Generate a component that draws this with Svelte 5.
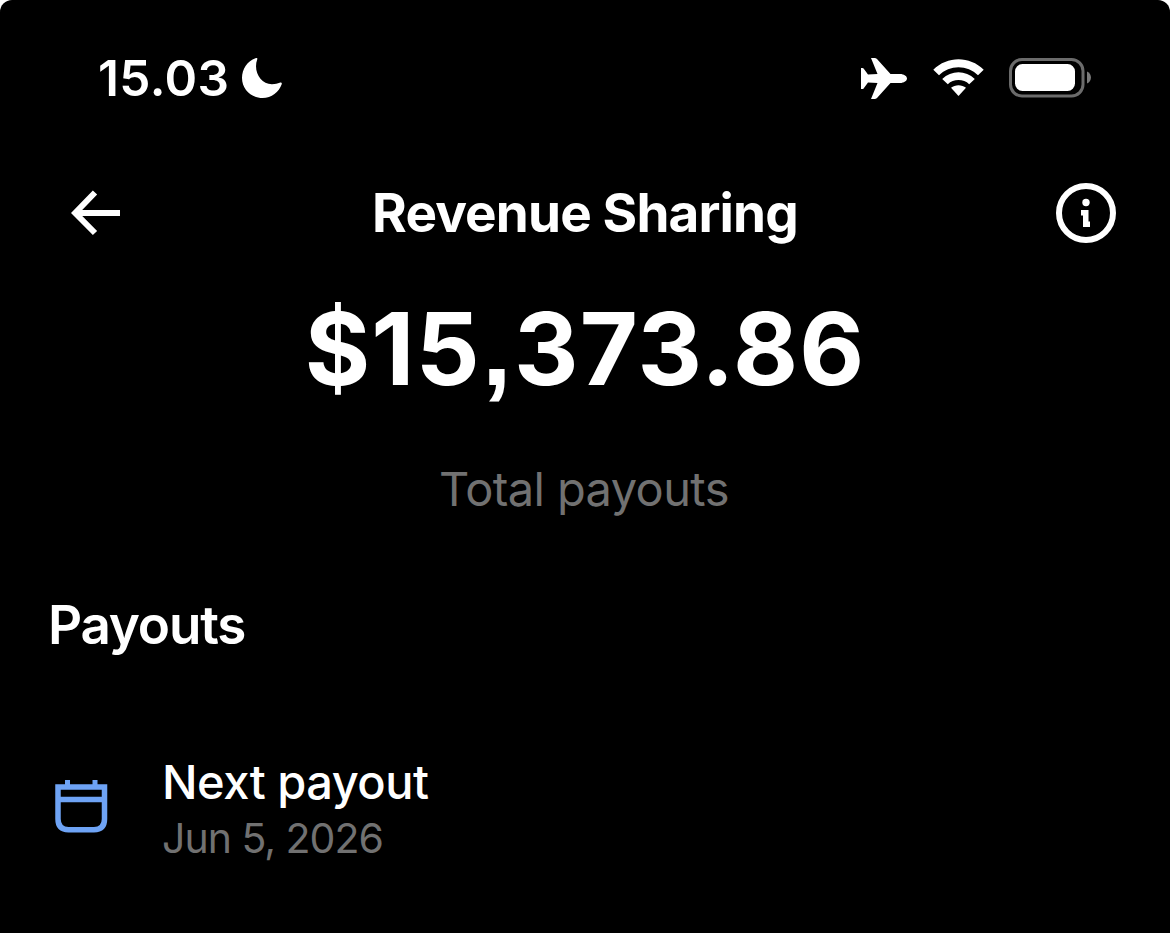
<script lang="ts">
  let time = '15.03';
  let total = '$15,373.86';
  let [thousands, rest] = total.split(',');
  let payouts = [{ title: 'Next payout', date: 'Jun 5, 2026' }];
</script>

<div class="screen">
  <div class="status-bar">
    <span class="time">{time}</span>
    <svg class="moon" width="42" height="42" viewBox="0 0 42 42">
      <path d="M14.500 1.200C16 .7 16.800 1.200 16.200 2.500C12 14 19.500 27.300 31 27.200C34.500 27.200 36.500 26.600 38.600 25.800C40.300 25.300 41.200 25.800 40.700 27.200C38 35 30.500 41 21.600 41C10.500 41 1 32.500 1 21C1 12 6.500 4 14.500 1.200Z" fill="#fff" />
    </svg>
    <div class="status-icons">
      <svg class="plane" width="46" height="42" viewBox="0 0 46 42">
        <path d="M10 0H13.500Q15 0 16 1.100L29.500 16H39C43 16 46 18.200 46 20.500C46 22.800 43 25 39 25H29.500L16 39.900Q15 41 13.500 41H10L16.500 25L7 24.400L2.600 30.400Q2.200 31 1.500 31H0V10H1.500Q2.200 10 2.600 10.600L7 16.600L16.500 16Z" fill="#fff" />
      </svg>
      <svg class="wifi" width="52" height="38" viewBox="0 0 52 38">
        <path d="M.3 10.800C14.300-3.200 36.700-3.200 50.700 10.800L45 16.300C34.500 5.500 16.500 5.500 6 16.300Z" fill="#fff" />
        <path d="M9.200 19.900C18.300 11.100 32.700 11.100 41.800 19.900L36.200 25.300C30.500 19.700 20.500 19.700 14.800 25.300Z" fill="#fff" />
        <path d="M18 28.700C22.200 25.300 28.800 25.300 33 28.700L25.500 37Z" fill="#fff" />
      </svg>
      <svg class="battery" width="82" height="40" viewBox="0 0 82 40">
        <rect x="1.500" y="1.500" width="72.500" height="36.500" rx="11.500" fill="none" stroke="#6b6b6b" stroke-width="3" />
        <rect x="6" y="6" width="60" height="27" rx="7.500" fill="#fff" />
        <path d="M78 13.500C83.300 15.500 83.300 23.500 78 25.500Z" fill="#7a7a7a" />
      </svg>
    </div>
  </div>

  <header>
    <svg width="52" height="46" viewBox="0 0 52 46">
      <path d="M25 2.500L5.200 23L25 43M5.200 23H50" fill="none" stroke="#fff" stroke-width="6" />
    </svg>
    <h1>Revenue Sharing</h1>
    <svg width="60" height="60" viewBox="0 0 60 60">
      <circle cx="30" cy="30" r="27" fill="none" stroke="#fff" stroke-width="6" />
      <circle cx="30" cy="19.500" r="3.700" fill="#fff" />
      <path d="M25 27H32.500V38.500H34V44H27V32.500H25Z" fill="#fff" />
    </svg>
  </header>

  <div class="total">{thousands}<span class="comma">,</span>{rest}</div>
  <div class="caption">Total payouts</div>

  <h2>Payouts</h2>

  {#each payouts as payout}
    <div class="payout">
      <svg width="54" height="54" viewBox="0 0 54 54">
        <path d="M3 7H49.500V39Q49.500 49.700 39 49.700H13.500Q3 49.700 3 39ZM3 19.500H49.500" fill="none" stroke="#6ea3f5" stroke-width="5.500" />
        <path d="M10 0H15V6H10ZM37.500 0H42.500V6H37.500Z" fill="#6ea3f5" />
      </svg>
      <div>
        <div class="payout-title">{payout.title}</div>
        <div class="payout-date">{payout.date}</div>
      </div>
    </div>
  {/each}
</div>

<style>
  :global(body) {
    background: #fff;
  }
  .screen {
    box-sizing: border-box;
    width: 1170px;
    height: 933px;
    padding-top: 48px;
    overflow: hidden;
    border-radius: 12px 12px 0 0;
    background: #000;
    color: #fff;
    font-family: Inter, sans-serif;
    white-space: nowrap;
  }
  svg {
    display: block;
    flex: none;
  }
  .status-bar {
    display: flex;
    align-items: center;
    height: 60px;
    padding: 0 79px 0 98px;
  }
  .time {
    width: 143px;
    font-size: 49.5px;
    font-weight: 600;
    letter-spacing: 0.4px;
    line-height: 60px;
  }
  .status-icons {
    display: flex;
    align-items: center;
    margin-left: auto;
  }
  .plane {
    margin-top: 2px;
  }
  .wifi {
    margin-left: 26px;
  }
  .battery {
    margin-left: 24px;
  }
  header {
    display: flex;
    align-items: center;
    justify-content: space-between;
    height: 60px;
    margin-top: 75px;
    padding: 0 54px 0 70px;
  }
  h1 {
    margin: 0 8px 0 0;
    padding-top: 1px;
    font-size: 53px;
    font-weight: 700;
    letter-spacing: -0.85px;
    line-height: 59px;
  }
  .total {
    margin-top: 46px;
    font-size: 100px;
    font-weight: 700;
    letter-spacing: 1.2px;
    line-height: 120px;
    text-align: center;
  }
  .comma {
    margin: 0 1px;
    font-family: "Liberation Sans", sans-serif;
    font-size: 108px;
    line-height: 1;
  }
  .caption {
    margin-top: 50px;
    padding-right: 2px;
    color: #717171;
    font-size: 47px;
    letter-spacing: -0.6px;
    line-height: 60px;
    text-align: center;
  }
  h2 {
    margin: 76px 0 0 48px;
    font-size: 53px;
    font-weight: 600;
    letter-spacing: -1.2px;
    line-height: 60px;
  }
  .payout {
    display: flex;
    align-items: flex-start;
    gap: 53px;
    margin-top: 99px;
    padding-left: 55px;
  }
  .payout svg {
    margin-top: 26px;
  }
  .payout-title {
    font-size: 47px;
    font-weight: 500;
    letter-spacing: -0.5px;
    line-height: 56px;
  }
  .payout-date {
    color: #717171;
    font-size: 41px;
    letter-spacing: -1px;
    line-height: 56px;
  }
</style>
